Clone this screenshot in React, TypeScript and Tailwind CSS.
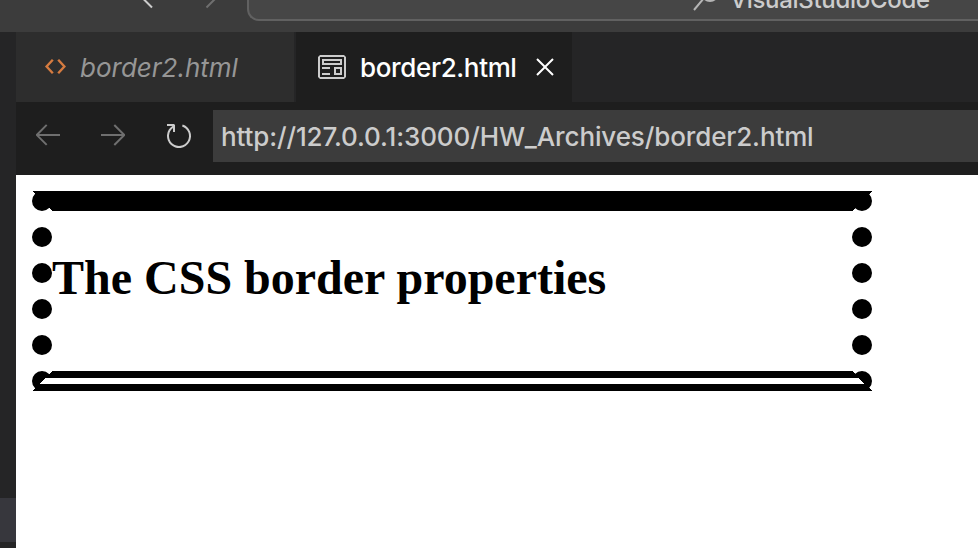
import { VscArrowLeft, VscArrowRight, VscClose, VscPreview, VscRefresh } from "react-icons/vsc";

const ui = "font-['Inter','Liberation_Sans',sans-serif] font-[450]";

function TitleBar() {
  return (
    <header className="flex h-8 shrink-0 items-start overflow-hidden bg-[#3c3c3c]">
      <svg className="h-8 w-[247px] shrink-0" viewBox="0 0 247 32" fill="none" strokeWidth="2">
        <path d="M140.500 -4L152 7.500" stroke="#cccccc" />
        <path d="M218 -4L206.500 7.500" stroke="#6f6f6f" />
      </svg>
      <div className="flex h-[21px] w-[900px] shrink-0 items-end rounded-bl-[12px] border-b-2 border-l-2 border-[#616161] bg-[#464646]">
        <svg className="mb-2 ml-[443px] h-[11px] w-[30px] shrink-0" viewBox="0 0 30 11" fill="none" stroke="#b5b5b5" strokeWidth="2">
          <path d="M2 10L12 -2" />
          <circle cx="18" cy="-7" r="8" />
        </svg>
        <span className="mb-[7px] ml-[8px] h-[24px] text-[24px] leading-[24px] tracking-[-0.3px] text-[#cccccc]">VisualStudioCode</span>
      </div>
    </header>
  );
}

function Tabs() {
  return (
    <nav className="flex h-[70px] shrink-0 bg-[#252526]">
      <div className="flex w-[280px] items-center border-r-2 border-[#252526] bg-[#2d2d2d] pl-[28px] text-[26px] italic text-[#969696]">
        <svg className="h-[18px] w-[22px]" viewBox="0 0 22 18" fill="none" stroke="#d57b40" strokeWidth="2.4">
          <path d="M8.800 1.800L2.600 8.500l6.200 6.700M14.200 1.800L20.400 8.500l-6.200 6.700" />
        </svg>
        <span className="ml-[14px]">border2.html</span>
      </div>
      <div className="flex w-[276px] items-center bg-[#1e1e1e] pl-5 text-[26px] text-white">
        <VscPreview className="size-8 shrink-0 text-[#cccccc]" />
        <span className="ml-3 tracking-[-0.35px]">border2.html</span>
        <VscClose className="ml-3 size-8 shrink-0" />
      </div>
    </nav>
  );
}

function Toolbar() {
  return (
    <div className="flex h-[73px] shrink-0 items-start bg-[#1e1e1e] pt-2">
      <div className="flex h-12 w-[197px] shrink-0 items-center pl-4">
        <VscArrowLeft className="size-8 text-[#6f6f6f]" />
        <VscArrowRight className="ml-[33px] size-8 text-[#6f6f6f]" />
        <VscRefresh className="ml-[34px] mt-[4px] size-8 text-[#cccccc]" />
      </div>
      <div className="flex h-[52px] flex-1 items-center bg-[#3c3c3c] pl-2 text-[26px] tracking-[-0.12px] text-[#cccccc]">
        <span className="whitespace-nowrap">http://127.0.0.1:3000/HW_Archives/border2.html</span>
      </div>
    </div>
  );
}

export default function App() {
  return (
    <div className={`flex h-[548px] w-[978px] flex-col overflow-hidden ${ui}`}>
      <TitleBar />
      <div className="flex min-h-0 flex-1">
        <aside className="flex w-4 shrink-0 flex-col bg-[#252526] pt-[466px]">
          <div className="h-11 shrink-0 bg-[#37373d]" />
        </aside>
        <section className="flex min-w-0 flex-1 flex-col">
          <Tabs />
          <Toolbar />
          <main className="flex-1 bg-white p-4">
            <div className="h-[200px] w-[840px] border-[20px] border-black [border-style:solid_dotted_double]">
              <h1 className="pt-[40px] font-['Liberation_Serif',serif] text-[48px] font-bold leading-[54px] text-black">
                The CSS border properties
              </h1>
            </div>
          </main>
        </section>
      </div>
    </div>
  );
}
